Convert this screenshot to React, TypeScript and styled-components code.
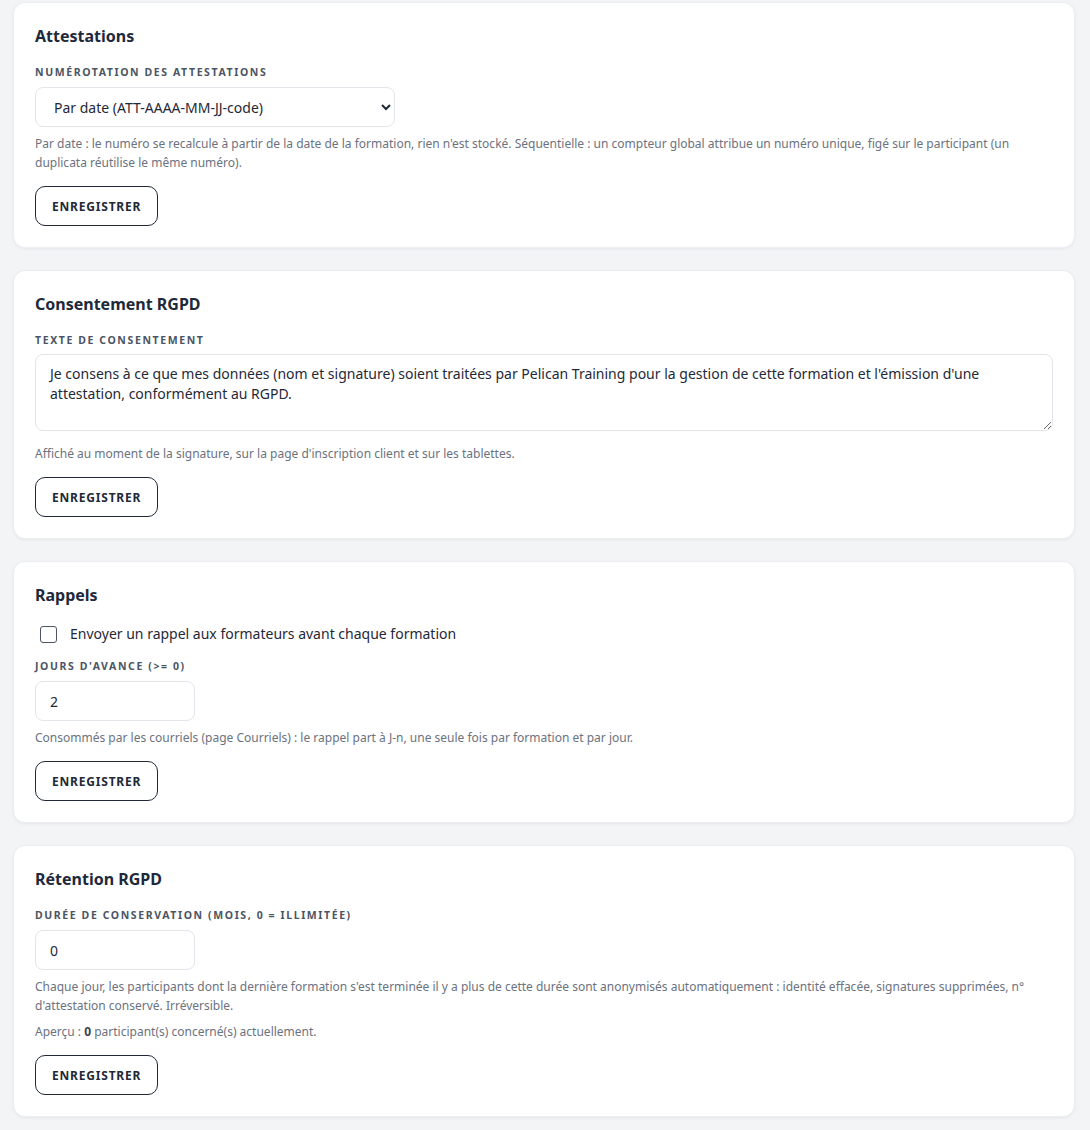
import { ReactElement } from 'react'
import styled, { createGlobalStyle } from 'styled-components'

const FONT = `"Noto Sans", "Open Sans", sans-serif`

const GlobalStyle = createGlobalStyle`
  body {
    margin: 0;
    background-color: #f3f4f6;
    font-family: ${FONT};
    color: #1f2937;
  }
`

const Page = styled.div`
  display: flex;
  flex-direction: column;
  gap: 22px;
  padding: 2px 15px 13px 13px;
`

const Card = styled.section`
  background-color: #ffffff;
  border: 1px solid #eceef1;
  border-radius: 12px;
  box-shadow: 0 1px 3px rgba(15, 23, 42, 0.06);
  padding: 21px;
  display: flex;
  flex-direction: column;
  align-items: flex-start;
`

const Title = styled.h2`
  margin: 0 0 16px;
  font-size: 16px;
  line-height: 24px;
  font-weight: 700;
  color: #1e293b;
`

const Label = styled.label<{ $gap?: number }>`
  display: block;
  margin-bottom: ${(p) => p.$gap ?? 7}px;
  font-size: 10.5px;
  line-height: 16px;
  font-weight: 700;
  letter-spacing: 1.6px;
  text-transform: uppercase;
  color: #4b5563;
`

const Select = styled.select`
  width: 360px;
  height: 40px;
  padding: 0 10px 0 14px;
  border: 1px solid #e2e5ea;
  border-radius: 8px;
  background-color: #ffffff;
  font-family: ${FONT};
  font-size: 14px;
  color: #1f2937;
`

const TextArea = styled.textarea`
  display: block;
  box-sizing: border-box;
  width: 100%;
  height: 77px;
  padding: 9px 14px;
  border: 1px solid #e2e5ea;
  border-radius: 8px;
  font-family: ${FONT};
  font-size: 14px;
  line-height: 20px;
  color: #1f2937;
  resize: vertical;
`

const NumberInput = styled.input`
  display: block;
  box-sizing: border-box;
  width: 160px;
  height: 40px;
  padding: 0 14px;
  border: 1px solid #e2e5ea;
  border-radius: 8px;
  font-family: ${FONT};
  font-size: 14px;
  color: #1f2937;
`

const Help = styled.p<{ $gap?: number }>`
  margin: ${(p) => p.$gap ?? 7}px 0 0;
  font-size: 12px;
  line-height: 19px;
  color: #6b7280;

  strong {
    font-weight: 700;
    color: #374151;
  }
`

const CheckRow = styled.label`
  display: flex;
  align-items: center;
  gap: 13px;
  margin: 1px 0 14px 5px;
  font-size: 14px;
  line-height: 20px;
  color: #1f2937;
`

const Checkbox = styled.input`
  appearance: none;
  margin: 0;
  width: 17px;
  height: 17px;
  border: 1.5px solid #4b5563;
  border-radius: 3px;
  background-color: #ffffff;
`

const SaveButton = styled.button`
  margin-top: 14px;
  height: 40px;
  padding: 0 16px;
  border: 1px solid #1f2937;
  border-radius: 10px;
  background-color: #ffffff;
  font-family: ${FONT};
  font-size: 12px;
  font-weight: 700;
  letter-spacing: 0.8px;
  color: #1f2937;
  cursor: pointer;
`

const App = (): ReactElement => {
  return (
    <>
      <GlobalStyle />
      <Page>
        <Card>
          <Title>Attestations</Title>
          <Label>Numérotation des attestations</Label>
          <Select defaultValue="date">
            <option value="date">Par date (ATT-AAAA-MM-JJ-code)</option>
            <option value="seq">Séquentielle</option>
          </Select>
          <Help>
            Par date : le numéro se recalcule à partir de la date de la
            formation, rien n'est stocké. Séquentielle : un compteur global
            attribue un numéro unique, figé sur le participant (un duplicata
            réutilise le même numéro).
          </Help>
          <SaveButton>ENREGISTRER</SaveButton>
        </Card>

        <Card>
          <Title>Consentement RGPD</Title>
          <Label $gap={6}>Texte de consentement</Label>
          <TextArea defaultValue="Je consens à ce que mes données (nom et signature) soient traitées par Pelican Training pour la gestion de cette formation et l'émission d'une attestation, conformément au RGPD." />
          <Help $gap={13}>
            Affiché au moment de la signature, sur la page d'inscription client
            et sur les tablettes.
          </Help>
          <SaveButton>ENREGISTRER</SaveButton>
        </Card>

        <Card>
          <Title>Rappels</Title>
          <CheckRow>
            <Checkbox type="checkbox" />
            Envoyer un rappel aux formateurs avant chaque formation
          </CheckRow>
          <Label>Jours d'avance (&gt;= 0)</Label>
          <NumberInput type="number" defaultValue={2} />
          <Help>
            Consommés par les courriels (page Courriels) : le rappel part à
            J-n, une seule fois par formation et par jour.
          </Help>
          <SaveButton>ENREGISTRER</SaveButton>
        </Card>

        <Card>
          <Title>Rétention RGPD</Title>
          <Label>Durée de conservation (mois, 0 = illimitée)</Label>
          <NumberInput type="number" defaultValue={0} />
          <Help>
            Chaque jour, les participants dont la dernière formation s'est
            terminée il y a plus de cette durée sont anonymisés
            automatiquement : identité effacée, signatures supprimées, n°
            d'attestation conservé. Irréversible.
          </Help>
          <Help $gap={7}>
            Aperçu : <strong>0</strong> participant(s) concerné(s) actuellement.
          </Help>
          <SaveButton>ENREGISTRER</SaveButton>
        </Card>
      </Page>
    </>
  )
}

export default App
